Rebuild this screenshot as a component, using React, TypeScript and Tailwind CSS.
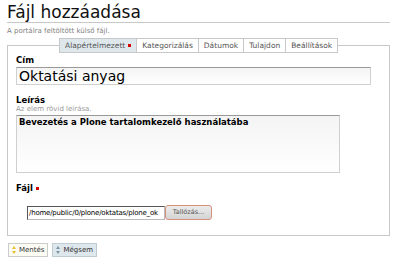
import type { ReactNode } from 'react';

const tabs = ['Alapértelmezett', 'Kategorizálás', 'Dátumok', 'Tulajdon', 'Beállítások'];

function Req() {
  return <span className="inline-block w-[3px] h-[3px] bg-[#d40000] ml-[3px] align-middle" />;
}

function ButtonIcon({ color }: { color: string }) {
  return (
    <svg width="4" height="8" viewBox="0 0 4 8" className="mr-[3px]">
      <path d="M0 3 L2 0 L4 3 Z" fill={color} />
      <path d="M0 5 L2 8 L4 5 Z" fill={color} />
    </svg>
  );
}

function Label({ children }: { children: ReactNode }) {
  return <div className="text-[8.5px] font-bold text-black leading-[10px]">{children}</div>;
}

export default function App() {
  return (
    <div className="w-[400px] h-[267px] bg-white overflow-hidden font-['DejaVu_Sans',sans-serif] text-black">
      {/* Heading */}
      <div className="pl-[7px] pr-[10px] pt-[3px]">
        <h1 className="text-[17px] leading-[19px] font-normal text-[#111] border-b border-[#c8c8c8]">
          Fájl hozzáadása
        </h1>
        <p className="text-[7px] text-[#808080] mt-[4px] leading-[9px]">A portálra feltöltött külső fájl.</p>
      </div>

      {/* Fieldset with tabs */}
      <div className="ml-[7px] mr-[10px] mt-[9px] border border-[#c8c8c8] h-[191px]">
        <div className="flex -mt-[8px] ml-[51px]">
          {tabs.map((t, i) => (
            <div
              key={t}
              className={
                'h-[15px] px-[5px] flex items-center text-[7.5px] text-[#555] border border-[#c8c8c8] ' +
                (i > 0 ? 'border-l-0 ' : '') +
                (i === 0 ? 'bg-[#dee7ec]' : 'bg-white')
              }
            >
              {t}
              {i === 0 && <Req />}
            </div>
          ))}
        </div>

        <div className="pl-[8px] pt-[2px]">
          <Label>Cím</Label>
          <div className="mt-[2px] w-[355px] h-[18px] border border-[#d0d0d0] border-t-[#999] bg-gradient-to-b from-[#f4f4f4] to-white px-[2px] flex items-center text-[14px] leading-none">
            Oktatási anyag
          </div>

          <div className="mt-[10px]">
            <Label>Leírás</Label>
          </div>
          <div className="text-[7px] text-[#999] leading-[9px]">Az elem rövid leírása.</div>
          <div className="mt-[1px] w-[324px] h-[58px] border border-[#d0d0d0] border-t-[#999] bg-gradient-to-b from-[#f4f4f4] to-white px-[2px] pt-[1px] text-[8.5px] font-bold leading-[11px]">
            Bevezetés a Plone tartalomkezelő használatába
          </div>

          <div className="mt-[10px] flex items-center">
            <Label>Fájl</Label>
            <Req />
          </div>

          <div className="mt-[12px] ml-[11px] flex items-center">
            <div className="w-[138px] h-[14px] border border-[#bbb] border-t-[#555] border-l-[#555] bg-white overflow-hidden whitespace-nowrap text-[7px] tracking-[-0.2px] leading-[12px] pl-[1px]">
              /home/public/0/plone/oktatas/plone_ok
            </div>
            <div className="w-[47px] h-[15px] rounded-[3px] border border-[#d9907a] bg-gradient-to-b from-[#ececec] to-[#d4d4d4] text-[6.5px] text-[#555] flex items-center justify-center">
              Tallózás...
            </div>
          </div>
        </div>
      </div>

      {/* Buttons */}
      <div className="flex gap-[4px] ml-[8px] mt-[7px]">
        <div className="h-[14px] px-[3px] flex items-center border border-[#ccc] bg-[#fcfcf4] text-[7px] text-[#333]">
          <ButtonIcon color="#e8c030" />
          Mentés
        </div>
        <div className="h-[14px] px-[3px] flex items-center border border-[#c0ccd4] bg-[#dee7ec] text-[7px] text-[#333]">
          <ButtonIcon color="#7a98a8" />
          Mégsem
        </div>
      </div>
    </div>
  );
}
